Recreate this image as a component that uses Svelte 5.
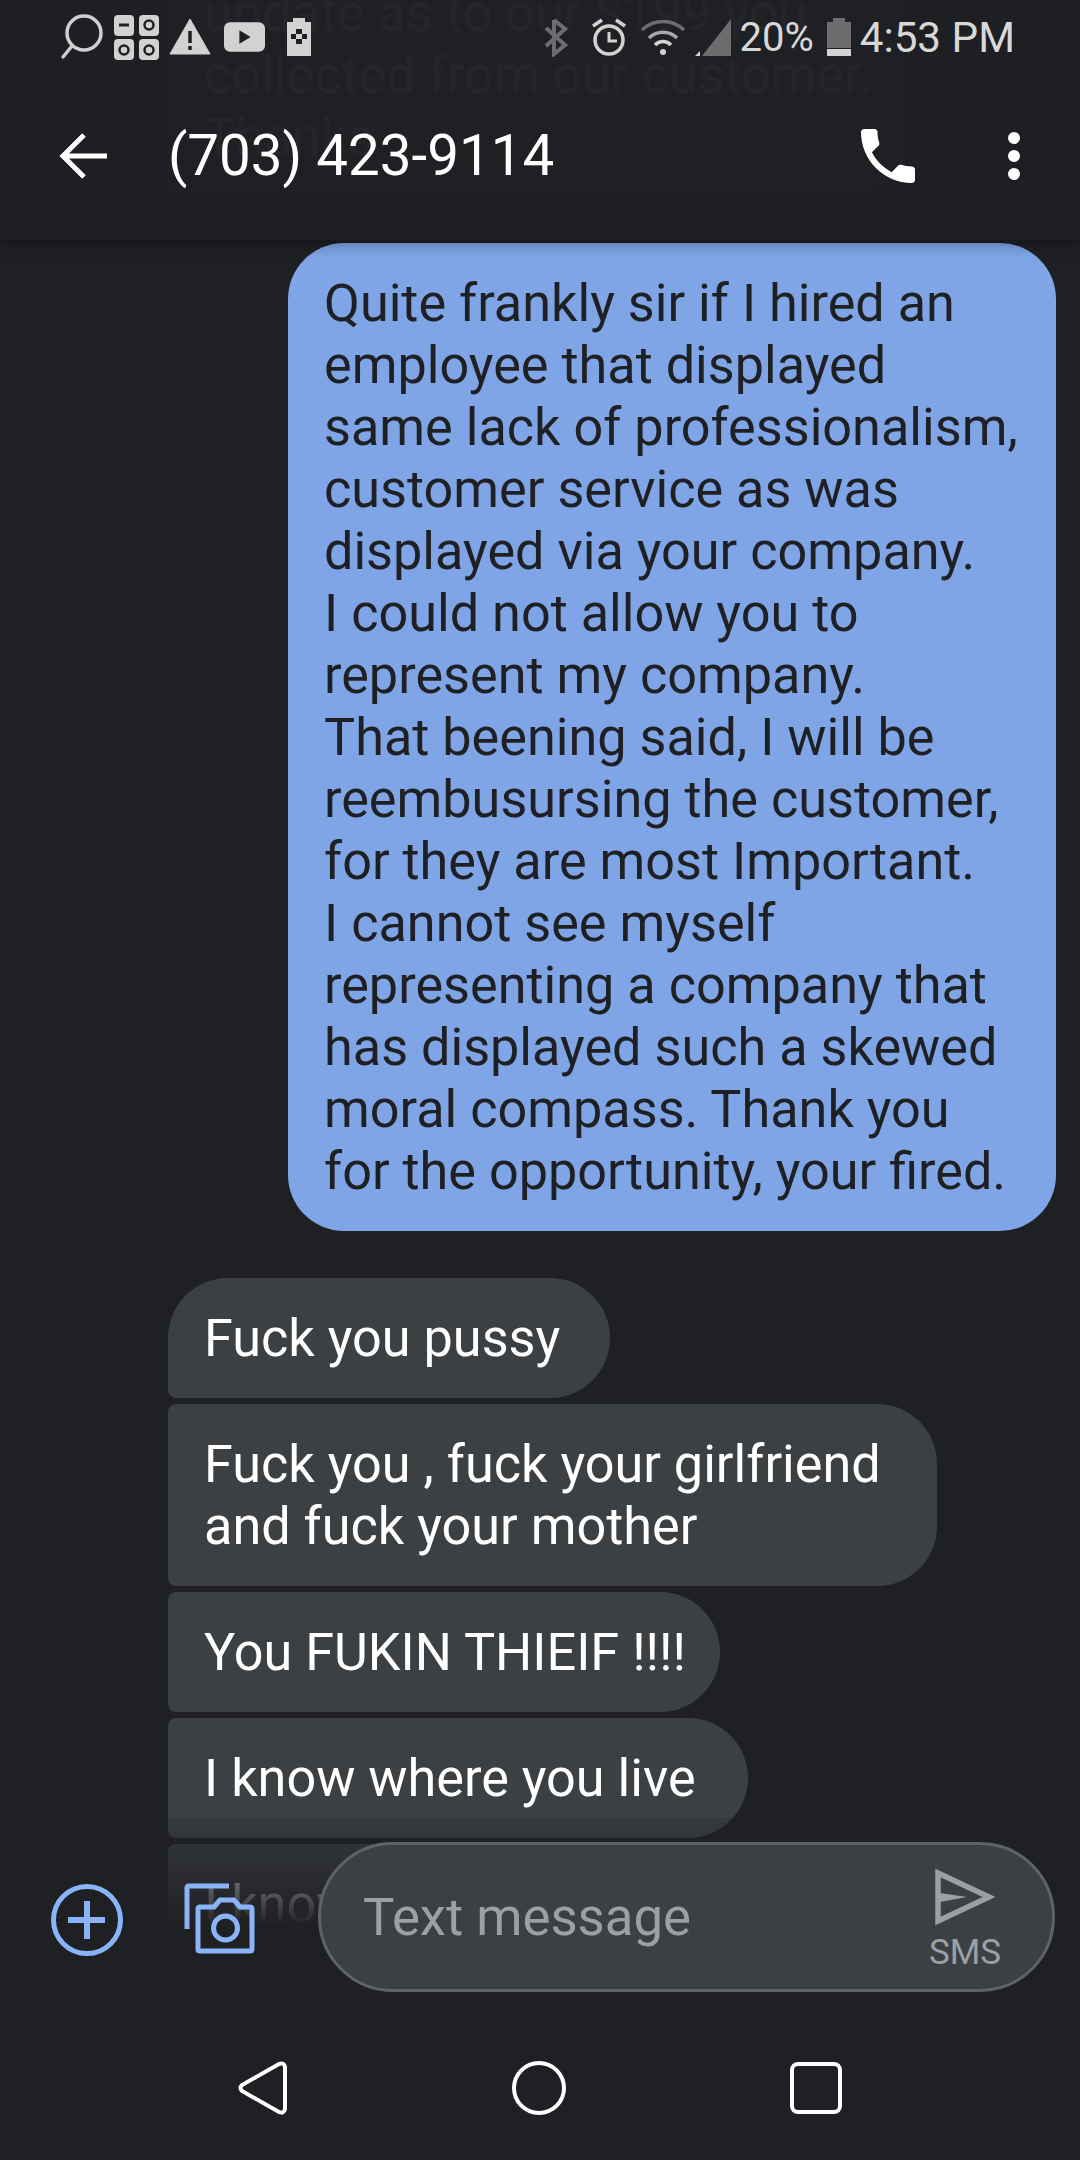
<script>
	const sent = `Quite frankly sir if I hired an
employee that displayed
same lack of professionalism,
customer service as was
displayed via your company.
I could not allow you to
represent my company.
That beening said, I will be
reembusursing the customer,
for they are most Important.
I cannot see myself
representing a company that
has displayed such a skewed
moral compass. Thank you
for the opportunity, your fired.`;

	const received = [
		{ text: 'Fuck you pussy', width: 442 },
		{ text: 'Fuck you , fuck your girlfriend\nand fuck your mother', width: 769 },
		{ text: 'You FUKIN THIEIF !!!!', width: 552 },
		{ text: 'I know where you live', width: 580 },
		{ text: 'I know', width: 580 }
	];
</script>

<div class="phone">
	<header class="top">
		<div class="status">
			<div class="status-left">
				<svg width="46" height="48" viewBox="0 0 46 48">
					<circle cx="26" cy="20" r="17" fill="none" stroke="#cfcfcf" stroke-width="3.5" />
					<path d="M14 33 5 44" stroke="#cfcfcf" stroke-width="3.5" stroke-linecap="round" />
				</svg>
				<svg class="calc" width="46" height="46" viewBox="0 0 46 46">
					<rect x="1" y="1" width="20" height="21" rx="4" fill="#d2d2d2" />
					<rect x="26" y="1" width="20" height="21" rx="4" fill="#d2d2d2" />
					<rect x="1" y="25" width="20" height="21" rx="4" fill="#d2d2d2" />
					<rect x="26" y="25" width="20" height="21" rx="4" fill="#d2d2d2" />
					<path d="M6 11h10" stroke="#1f2024" stroke-width="3" />
					<circle cx="36" cy="11" r="4.5" fill="none" stroke="#1f2024" stroke-width="2.5" />
					<circle cx="11" cy="36" r="4.5" fill="none" stroke="#1f2024" stroke-width="2.5" />
					<circle cx="36" cy="36" r="4.5" fill="none" stroke="#1f2024" stroke-width="2.5" />
				</svg>
				<svg class="warn" width="42" height="36" viewBox="0 0 42 36">
					<path d="M21 0 41 35H1z" fill="#d2d2d2" stroke="#d2d2d2" stroke-linejoin="round" />
					<path d="M21 12v12M21 27v4" stroke="#1f2024" stroke-width="3.5" />
				</svg>
				<svg class="yt" width="41" height="30" viewBox="0 0 40 29">
					<rect width="40" height="29" rx="6" fill="#d2d2d2" />
					<path d="M15 8l11 6.5-11 6.5z" fill="#1f2024" />
				</svg>
				<svg class="pack" width="24" height="40" viewBox="0 0 24 38">
					<path d="M6 0h12v4h6v34H0V4h6z" fill="#d2d2d2" />
					<path d="M9 11h6v5h5v5h-5v5H9v-5H4v-5h5z" fill="#1f2024" />
					<path d="M9 16h6v5H9z" fill="#d2d2d2" />
				</svg>
			</div>
			<div class="status-right">
				<svg class="bt" width="24" height="40" viewBox="0 0 24 38">
					<path d="M10 2v34l11-9-19-17M10 2l11 9L2 28" fill="none" stroke="#6d6d6f" stroke-width="4" />
				</svg>
				<svg class="alarm" width="36" height="40" viewBox="0 0 36 40">
					<circle cx="18" cy="23" r="14" fill="none" stroke="#d2d2d2" stroke-width="3.5" />
					<path d="M18 15v9h8" fill="none" stroke="#d2d2d2" stroke-width="3" />
					<path d="M2 9l9-6M34 9l-9-6" stroke="#d2d2d2" stroke-width="3.5" />
				</svg>
				<svg class="wifi" width="46" height="38" viewBox="0 0 46 38">
					<path d="M2 12a30 30 0 0 1 42 0" fill="none" stroke="#6d6d6f" stroke-width="3.5" />
					<path d="M9 20a20 20 0 0 1 28 0" fill="none" stroke="#a8a8a8" stroke-width="3.5" />
					<path d="M15 27a11 11 0 0 1 16 0" fill="none" stroke="#d2d2d2" stroke-width="3.5" />
					<circle cx="23" cy="34" r="3" fill="#d2d2d2" />
				</svg>
				<svg class="signal" width="36" height="37" viewBox="0 0 36 37">
					<path d="M36 0v37H7z" fill="#6d6d6f" />
					<path d="M5 32v5H0z" fill="#d2d2d2" />
				</svg>
				<span class="pct">20%</span>
				<svg class="batt" width="24" height="40" viewBox="0 0 24 38">
					<path d="M6 0h12v4h6v26H0V4h6z" fill="#6d6d6f" />
					<path d="M0 31h24v7H0z" fill="#d2d2d2" />
				</svg>
				<span class="clock">4:53 PM</span>
			</div>
		</div>
		<div class="toolbar">
			<svg class="back" width="50" height="48" viewBox="0 0 50 48">
				<path d="M49 24H5M26 3 5 24l21 21" fill="none" stroke="#fff" stroke-width="5" />
			</svg>
			<h1>(703) 423-9114</h1>
			<svg class="call" width="72" height="72" viewBox="0 0 24 24">
				<path
					fill="#fff"
					d="M6.62 10.79c1.44 2.83 3.76 5.14 6.59 6.59l2.2-2.2c.27-.27.67-.36 1.02-.24 1.12.37 2.33.57 3.57.57.55 0 1 .45 1 1V20c0 .55-.45 1-1 1-9.39 0-17-7.61-17-17 0-.55.45-1 1-1h3.5c.55 0 1 .45 1 1 0 1.25.2 2.45.57 3.57.11.35.03.74-.25 1.02l-2.2 2.2z"
				/>
			</svg>
			<div class="more"><i></i><i></i><i></i></div>
		</div>
	</header>

	<main class="thread">
		<div class="ghost-row">
			<div class="avatar">
				<svg width="120" height="120" viewBox="0 0 120 120">
					<circle cx="60" cy="42" r="14" fill="#17171a" />
					<path d="M32 84c0-16 56-16 56 0z" fill="#17171a" />
				</svg>
			</div>
			<div class="bubble in">update as to our $199 you{'\n'}collected from our customer.{'\n'}Thanks</div>
		</div>
		<div class="bubble out">{sent}</div>
		<div class="group">
			{#each received as msg, i}
				<div class="bubble in" class:first={i === 0} style="width: {msg.width}px">{msg.text}</div>
			{/each}
		</div>
	</main>

	<div class="composer">
		<svg class="plus" width="74" height="74" viewBox="0 0 74 74">
			<circle cx="37" cy="37" r="33.5" fill="none" stroke="#8ab4f8" stroke-width="5" />
			<path d="M18 37h37M37 18v38" stroke="#8ab4f8" stroke-width="6" />
		</svg>
		<svg class="camera" width="72" height="72" viewBox="0 0 72 72">
			<path d="M3 46V5q0-2 2-2h40" fill="none" stroke="#8ab4f8" stroke-width="5" />
			<path
				d="M16 24h14l6-7h14l6 7h10q2 0 2 2v40q0 2-2 2H16q-2 0-2-2V26q0-2 2-2z"
				fill="none"
				stroke="#8ab4f8"
				stroke-width="5"
				stroke-linejoin="round"
			/>
			<circle cx="41.5" cy="45" r="12" fill="none" stroke="#8ab4f8" stroke-width="5" />
		</svg>
		<div class="field">
			<span class="placeholder">Text message</span>
			<div class="send">
				<svg width="60" height="56" viewBox="0 0 60 56">
					<path d="M3 4 54 28 3 52z" fill="none" stroke="#9aa0a6" stroke-width="5.5" />
					<path d="M5 24 32 28 5 33z" fill="#9aa0a6" />
				</svg>
				<span>SMS</span>
			</div>
		</div>
	</div>

	<nav class="nav">
		<svg width="52" height="56" viewBox="0 0 52 56">
			<path
				d="M42 4 5 25q-3 3 0 6l37 21q5 2 6-3V7q-1-5-6-3z"
				fill="none"
				stroke="#fff"
				stroke-width="4"
			/>
		</svg>
		<svg width="54" height="54" viewBox="0 0 54 54">
			<circle cx="27" cy="27" r="25" fill="none" stroke="#fff" stroke-width="4" />
		</svg>
		<svg width="54" height="54" viewBox="0 0 54 54">
			<rect x="3" y="3" width="48" height="48" rx="6" fill="none" stroke="#fff" stroke-width="4" />
		</svg>
	</nav>
</div>

<style>
	:global(body) {
		background: #1f2024;
	}

	.phone {
		position: relative;
		display: flex;
		flex-direction: column;
		width: 1080px;
		height: 2160px;
		overflow: hidden;
		background: #1f2024;
		font-family: Roboto, 'Liberation Sans', sans-serif;
		color: #fff;
	}

	/* Header lies over the scrolled thread */
	.top {
		position: absolute;
		z-index: 2;
		top: 0;
		left: 0;
		right: 0;
		height: 240px;
		background: rgba(31, 32, 36, 0.975);
		box-shadow: 0 4px 14px rgba(0, 0, 0, 0.35);
	}

	.status {
		display: flex;
		justify-content: space-between;
		align-items: center;
		height: 74px;
		padding: 0 65px 0 58px;
	}

	.status-left,
	.status-right {
		display: flex;
		align-items: center;
	}

	.calc {
		margin-left: 9px;
	}

	.warn {
		margin-left: 10px;
	}

	.yt {
		margin-left: 13px;
	}

	.pack {
		margin-left: 22px;
	}

	.alarm {
		margin-left: 23px;
	}

	.wifi {
		margin-left: 13px;
	}

	.signal {
		margin-left: 9px;
	}

	.pct {
		margin-left: 8px;
		font-size: 40px;
		color: #d8d8d8;
	}

	.batt {
		margin-left: 13px;
	}

	.clock {
		margin-left: 9px;
		font-size: 42.2px;
		color: #d8d8d8;
	}

	.toolbar {
		display: flex;
		align-items: center;
		height: 164px;
		padding: 0 60px 0 58px;
	}

	h1 {
		flex: 1;
		margin: 0 0 0 60px;
		font-size: 56.5px;
		font-weight: 400;
		white-space: nowrap;
	}

	.call {
		margin-right: 84px;
	}

	.more {
		display: flex;
		flex-direction: column;
		gap: 6px;
	}

	.more i {
		width: 12px;
		height: 12px;
		border-radius: 50%;
		background: #fff;
	}

	/* Thread */
	.thread {
		flex: 1;
		display: flex;
		flex-direction: column;
		align-items: flex-start;
		margin-top: -47px;
		padding: 0 24px;
		min-height: 0;
	}

	.ghost-row {
		display: flex;
		height: 242px;
		gap: 24px;
	}

	.avatar {
		width: 120px;
		height: 120px;
		margin-top: 122px;
		border-radius: 50%;
		background: #232125;
	}

	.bubble {
		box-sizing: border-box;
		padding: 30px 36px 28px;
		font-size: 52.2px;
		line-height: 62px;
		white-space: pre;
	}

	.in {
		background: #3c4043;
		border-radius: 8px 60px 60px 8px;
	}

	.in.first {
		border-top-left-radius: 60px;
	}

	.out {
		align-self: flex-end;
		width: 768px;
		margin-top: 48px;
		background: #7fa5e6;
		color: #1f2024;
		border-radius: 56px;
	}

	.group {
		display: flex;
		flex-direction: column;
		gap: 6px;
		margin: 47px 0 0 144px;
	}

	/* Composer floats over the last messages */
	.composer {
		position: absolute;
		left: 0;
		right: 0;
		top: 1818px;
		height: 174px;
		display: flex;
		align-items: flex-end;
		background: linear-gradient(rgba(31, 32, 36, 0.2), #1f2024 62%);
	}

	.plus {
		position: absolute;
		left: 50px;
		top: 65px;
	}

	.camera {
		position: absolute;
		left: 184px;
		top: 65px;
	}

	.field {
		box-sizing: border-box;
		display: flex;
		justify-content: space-between;
		align-items: center;
		width: 737px;
		height: 150px;
		margin-left: 318px;
		padding: 0 51px 0 42px;
		background: #3c4043;
		border: 3px solid #5f6368;
		border-radius: 75px;
	}

	.placeholder {
		font-size: 52.7px;
		color: #9aa0a6;
	}

	.send {
		display: flex;
		flex-direction: column;
		align-items: center;
		margin-top: 5px;
		color: #9aa0a6;
		font-size: 35px;
		line-height: 36px;
	}

	.send span {
		margin-top: 10px;
	}

	.nav {
		display: flex;
		justify-content: center;
		align-items: center;
		gap: 223px;
		height: 168px;
		padding-top: 24px;
		box-sizing: border-box;
	}
</style>
